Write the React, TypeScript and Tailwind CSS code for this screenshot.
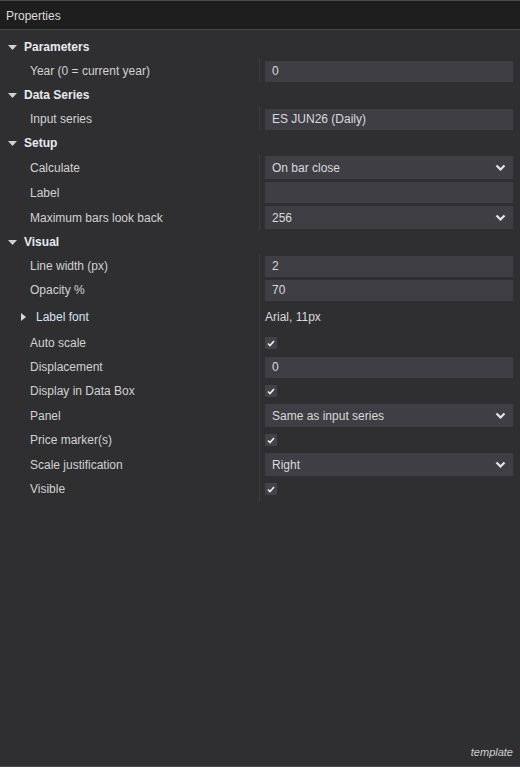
import React from "react";

type Row =
  | { kind: "cat"; label: string }
  | { kind: "input"; label: string; value: string; h?: number }
  | { kind: "select"; label: string; value: string }
  | { kind: "check"; label: string }
  | { kind: "expand"; label: string; value: string };

const rows: Row[] = [
  { kind: "cat", label: "Parameters" },
  { kind: "input", label: "Year (0 = current year)", value: "0" },
  { kind: "cat", label: "Data Series" },
  { kind: "input", label: "Input series", value: "ES JUN26 (Daily)" },
  { kind: "cat", label: "Setup" },
  { kind: "select", label: "Calculate", value: "On bar close" },
  { kind: "input", label: "Label", value: "", h: 25 },
  { kind: "select", label: "Maximum bars look back", value: "256" },
  { kind: "cat", label: "Visual" },
  { kind: "input", label: "Line width (px)", value: "2" },
  { kind: "input", label: "Opacity %", value: "70" },
  { kind: "expand", label: "Label font", value: "Arial, 11px" },
  { kind: "check", label: "Auto scale" },
  { kind: "input", label: "Displacement", value: "0" },
  { kind: "check", label: "Display in Data Box" },
  { kind: "select", label: "Panel", value: "Same as input series" },
  { kind: "check", label: "Price marker(s)" },
  { kind: "select", label: "Scale justification", value: "Right" },
  { kind: "check", label: "Visible" },
];

function Chevron() {
  return (
    <svg width="11" height="8" viewBox="0 0 11 8" className="shrink-0">
      <polyline points="1.5,1.5 5.5,5.5 9.5,1.5" fill="none" stroke="#e6e6e6" strokeWidth="2.2" />
    </svg>
  );
}

function PropRow({ label, h, children, indentTriangle }: { label: string; h: number; children?: React.ReactNode; indentTriangle?: boolean }) {
  return (
    <div className="flex" style={{ height: h }}>
      <div className="w-[259px] shrink-0 flex items-center text-[#d2d2d2]">
        {indentTriangle ? (
          <>
            <svg width="5" height="8" viewBox="0 0 5 8" className="ml-[21px] mr-[10px]">
              <polygon points="0,0 5,4 0,8" fill="#d8d8d8" />
            </svg>
            <span className="text-[#d6e4f5]">{label}</span>
          </>
        ) : (
          <span className="pl-[30px]">{label}</span>
        )}
      </div>
      <div className="flex-1 border-l border-[#3e3e40] flex items-center pl-[5px] pr-[7px]">{children}</div>
    </div>
  );
}

export default function App() {
  return (
    <div
      className="w-[520px] h-[767px] flex flex-col bg-[#2f2f31] text-[12px] leading-none text-[#d2d2d2] overflow-hidden"
      style={{ fontFamily: '"Liberation Sans", Arial, sans-serif' }}
    >
      <div className="h-[30px] shrink-0 border-t border-[#4a4a4a] bg-[#1e1e1e] border-b border-[#484848] flex items-center px-[6px] pt-[1px] text-[#dcdcdc]">
        Properties
      </div>
      <div className="flex-1 flex flex-col pt-[5px]">
        {rows.map((r, i) => {
          if (r.kind === "cat") {
            return (
              <div key={i} className="h-[24px] flex items-center">
                <svg width="9" height="5" viewBox="0 0 9 5" className="ml-[8px] mr-[7px]">
                  <polygon points="0,0 9,0 4.5,5" fill="#d0d0d0" />
                </svg>
                <span className="font-bold text-[#e6eaf0]">{r.label}</span>
              </div>
            );
          }
          if (r.kind === "input") {
            return (
              <PropRow key={i} label={r.label} h={r.h ?? 24}>
                <div className="h-[21px] w-full bg-[#3f3e45] px-[7px] flex items-center text-[#dadada]">{r.value}</div>
              </PropRow>
            );
          }
          if (r.kind === "select") {
            return (
              <PropRow key={i} label={r.label} h={25}>
                <div className="h-[23px] w-full bg-[#3f3e45] pl-[7px] pr-[7px] flex items-center justify-between text-[#dadada]">
                  <span>{r.value}</span>
                  <Chevron />
                </div>
              </PropRow>
            );
          }
          if (r.kind === "check") {
            return (
              <PropRow key={i} label={r.label} h={24}>
                <div className="w-[12px] h-[12px] bg-[#434248] flex items-center justify-center">
                  <svg width="8" height="7" viewBox="0 0 8 7">
                    <polyline points="1,3.5 3,5.5 7,1" fill="none" stroke="#f0f0f0" strokeWidth="1.6" />
                  </svg>
                </div>
              </PropRow>
            );
          }
          return (
            <PropRow key={i} label={r.label} h={29} indentTriangle>
              <span className="text-[#dadada]">{r.value}</span>
            </PropRow>
          );
        })}
        <div className="flex-1" />
        <div className="flex justify-end pr-[7px] pb-[8px]">
          <span className="italic text-[11px] text-[#d0d0d0]">template</span>
        </div>
      </div>
      <div className="h-[1px] shrink-0 bg-[#4a4a4a]" />
    </div>
  );
}
